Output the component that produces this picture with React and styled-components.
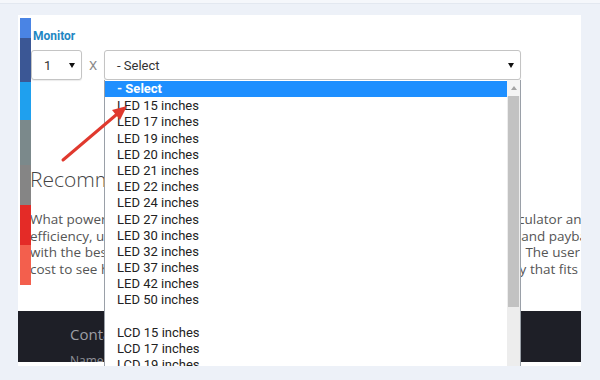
import React from 'react';
import styled, { createGlobalStyle } from 'styled-components';

const Global = createGlobalStyle`
  html, body {
    margin: 0;
    padding: 0;
    background: #edf1f8;
    font-family: "Open Sans", "Liberation Sans", sans-serif;
  }
`;

const Page = styled.div`
  width: 600px;
  height: 380px;
  overflow: hidden;
`;

const TopBand = styled.div`
  height: 3px;
  background: #f5f7fb;
  border-bottom: 1px solid #e3e8f0;
`;

const Card = styled.div`
  position: relative;
  margin: 11px 0 0 18px;
  width: 563px;
  height: 351px;
  background: #fff;
  overflow: hidden;
  display: flex;
  flex-direction: column;
`;

const ShareBar = styled.div`
  position: absolute;
  top: 3px;
  left: 2px;
  width: 11px;
  display: flex;
  flex-direction: column;
  z-index: 3;
`;

const Share = styled.div`
  height: ${p => p.h}px;
  background: ${p => p.c};
`;

const Content = styled.div`
  padding: 14px 0 0 13px;
`;

const Label = styled.div`
  margin-left: 2px;
  font-family: Roboto, "Liberation Sans", sans-serif;
  font-size: 12px;
  line-height: 14px;
  font-weight: 700;
  color: #1f87c3;
`;

const Row = styled.div`
  margin-top: 7px;
  display: flex;
  align-items: center;
  height: 30px;
`;

const SelectBox = styled.div`
  position: relative;
  box-sizing: border-box;
  width: ${p => p.w}px;
  height: 30px;
  border: 1px solid #c4c4c4;
  border-radius: 3px;
  box-shadow: 0 1px 1px rgba(0, 0, 0, 0.08);
  display: flex;
  align-items: center;
  justify-content: space-between;
  padding: 0 6px 0 ${p => p.pl}px;
  font-family: Roboto, "Liberation Sans", sans-serif;
  font-size: 13px;
  color: #333;
  background: #fff;
`;

const Caret = styled.span`
  width: 0;
  height: 0;
  border-left: 3px solid transparent;
  border-right: 3px solid transparent;
  border-top: 5px solid #111;
`;

const Times = styled.span`
  width: 22px;
  text-align: center;
  font-size: 13px;
  color: #8a8a8a;
  font-family: Roboto, "Liberation Sans", sans-serif;
`;

const Dropdown = styled.div`
  position: absolute;
  top: 29px;
  left: -1px;
  width: 417px;
  height: 300px;
  box-sizing: border-box;
  border: 1px solid #9aa0a8;
  border-top: none;
  background: #fff;
  display: flex;
  z-index: 2;
`;

const Options = styled.div`
  flex: 1;
  padding-top: 1px;
`;

const Option = styled.div`
  height: 16.2px;
  line-height: ${p => (p.active ? '16.2px' : '17.6px')};
  padding-left: 12px;
  font-family: Roboto, "Liberation Sans", sans-serif;
  font-size: 13px;
  color: ${p => (p.active ? '#fff' : '#222')};
  font-weight: ${p => (p.active ? 700 : 400)};
  background: ${p => (p.active ? '#1e8fff' : 'transparent')};
  white-space: pre;
`;

const Scrollbar = styled.div`
  width: 13px;
  background: #ededed;
  display: flex;
  flex-direction: column;
  align-items: center;
`;

const ScrollUp = styled.div`
  height: 16px;
  width: 13px;
  display: flex;
  align-items: center;
  justify-content: center;
  background: #f4f4f4;
  &::after {
    content: '';
    border-left: 3px solid transparent;
    border-right: 3px solid transparent;
    border-bottom: 4px solid #a3a3a3;
  }
`;

const Thumb = styled.div`
  width: 11px;
  height: 211px;
  background: #c2c2c2;
`;

const Heading = styled.h2`
  margin: 85px 0 0 -1px;
  font-size: 21px;
  line-height: 28px;
  font-weight: 300;
  color: #444;
`;

const Para = styled.div`
  margin-top: 18px;
  margin-left: -1px;
  font-size: 13.5px;
  line-height: 16.5px;
  color: #555;
`;

const Line = styled.div`
  display: flex;
  justify-content: space-between;
  white-space: nowrap;
  overflow: hidden;
  margin-right: ${p => p.mr}px;
`;

const Footer = styled.footer`
  margin-top: 34px;
  height: 51px;
  background: #1e1f27;
  padding-left: 52px;
  overflow: hidden;
`;

const FooterTitle = styled.div`
  padding-top: 13px;
  font-size: 15px;
  line-height: 20px;
  color: #9c9ea5;
`;

const FooterSmall = styled.div`
  margin-top: 8px;
  font-size: 12px;
  color: #8e9097;
`;

const Arrow = styled.svg`
  position: absolute;
  left: 40px;
  top: 85px;
  z-index: 4;
`;

const options = [
  '- Select',
  'LED 15 inches', 'LED 17 inches', 'LED 19 inches', 'LED 20 inches',
  'LED 21 inches', 'LED 22 inches', 'LED 24 inches', 'LED 27 inches',
  'LED 30 inches', 'LED 32 inches', 'LED 37 inches', 'LED 42 inches',
  'LED 50 inches', ' ',
  'LCD 15 inches', 'LCD 17 inches', 'LCD 19 inches', 'LCD 20 inches',
];

const shares = [
  ['#4a84e4', 20], ['#3b5795', 44], ['#1fa0ee', 38],
  ['#7b898b', 45], ['#858585', 40], ['#e42b27', 40], ['#f35f4d', 40],
];

const App = () => (
  <Page>
    <Global />
    <TopBand />
    <Card>
      <ShareBar>
        {shares.map(([c, h]) => <Share key={c} c={c} h={h} />)}
      </ShareBar>
      <Arrow width="100" height="80" viewBox="0 0 100 80">
        <line x1="5" y1="60" x2="58" y2="15" stroke="#e0392e" strokeWidth="3" strokeLinecap="round" />
        <polygon points="69,6 62,20 54,10" fill="#e0392e" />
      </Arrow>
      <Content>
        <Label>Monitor</Label>
        <Row>
          <SelectBox w={51} pl={12}>
            <span>1</span>
            <Caret />
          </SelectBox>
          <Times>X</Times>
          <SelectBox w={417} pl={12}>
            <span>- Select</span>
            <Caret />
            <Dropdown>
              <Options>
                {options.map((o, i) => (
                  <Option key={o + i} active={i === 0}>{o}</Option>
                ))}
              </Options>
              <Scrollbar>
                <ScrollUp />
                <Thumb />
              </Scrollbar>
            </Dropdown>
          </SelectBox>
        </Row>
        <Heading>Recommended power supply</Heading>
        <Para>
          <Line mr={-8}><span>What power supply do I need? Use our</span><span>calculator ana</span></Line>
          <Line mr={-6}><span>efficiency, use it to compare</span><span>and payba</span></Line>
          <Line mr={1}><span>with the best results.</span><span>The user</span></Line>
          <Line mr={3}><span>cost to see how much</span><span>easily that fits</span></Line>
        </Para>
      </Content>
      <Footer>
        <FooterTitle>Contact us</FooterTitle>
        <FooterSmall>Name</FooterSmall>
      </Footer>
    </Card>
  </Page>
);

export default App;
